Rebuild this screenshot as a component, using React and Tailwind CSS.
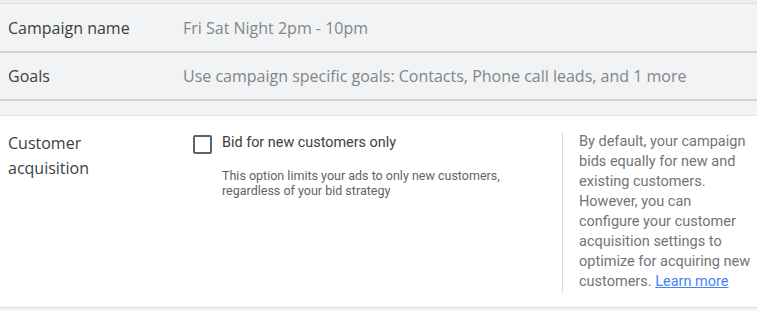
export default function App() {
  const labelFont = { fontFamily: '"Open Sans", "Noto Sans", sans-serif' };
  return (
    <div className="w-[757px] h-[311px] overflow-hidden bg-[#f1f3f4]" style={{ fontFamily: 'Roboto, "Liberation Sans", sans-serif' }}>
      {/* summary rows */}
      <div className="h-[4px] bg-[#eceef0] border-b border-[#dcdee1]" />
      <div className="h-[49px] flex items-center border-b-2 border-[#cfd1d4]">
        <div className="w-[183px] pl-2 text-[16px] text-[#3c4043]" style={labelFont}>Campaign name</div>
        <div className="text-[16px] text-[#80868b]" style={labelFont}>Fri Sat Night 2pm - 10pm</div>
      </div>
      <div className="h-[48px] flex items-center border-b-2 border-[#cfd1d4]">
        <div className="w-[183px] pl-2 text-[16px] text-[#3c4043]" style={labelFont}>Goals</div>
        <div className="text-[16px] text-[#80868b]" style={labelFont}>
          Use campaign specific goals: Contacts, Phone call leads, and 1 more
        </div>
      </div>
      <div className="h-[14px]" />

      {/* customer acquisition */}
      <div className="h-[193px] bg-white border-t border-[#e4e6e8] border-b border-b-[#dadce0] flex pt-[15px]">
        <div className="w-[193px] pl-2 text-[16px] leading-[25px] text-[#3c4043]" style={labelFont}>
          Customer
          <br />
          acquisition
        </div>
        <div className="w-[369px] flex gap-[10px]">
          <div className="w-[19px] h-[19px] mt-[4px] border-2 border-[#5f6368] rounded-[2px] shrink-0" />
          <div>
            <div className="text-[14.4px] leading-[24px] text-[#3c4043]">Bid for new customers only</div>
            <div className="mt-[13px] text-[12.5px] leading-[15px] text-[#5f6368] w-[300px]">
              This option limits your ads to only new customers, regardless of your bid strategy
            </div>
          </div>
        </div>
        <div className="mt-[1px] h-[161px] border-l border-[#dadce0] pl-[16px] w-[190px] text-[14.5px] leading-[20px] text-[#70757a]">
          By default, your campaign bids equally for new and existing customers. However, you can configure your customer acquisition settings to optimize for acquiring new customers.{' '}
          <a href="#" className="text-[#4285f4] underline">Learn more</a>
        </div>
      </div>
    </div>
  );
}
